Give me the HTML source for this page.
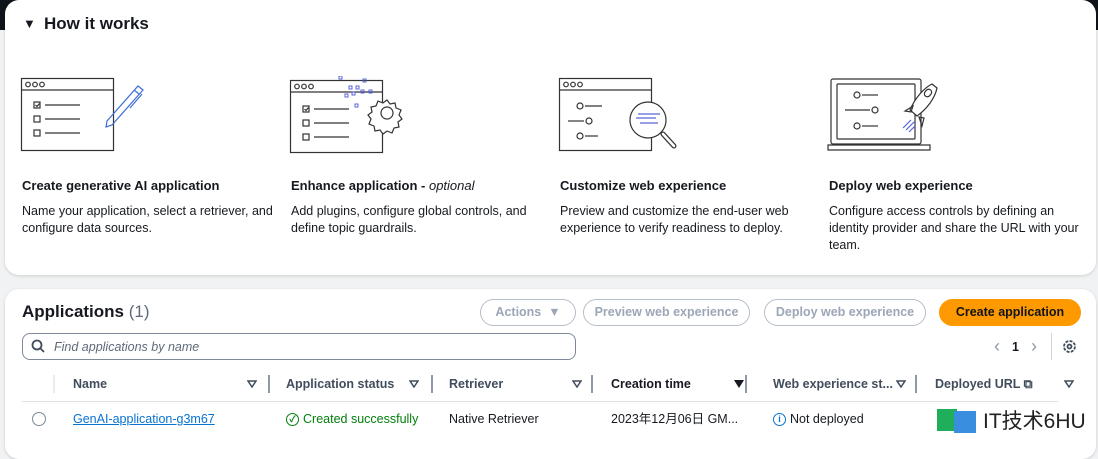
<!DOCTYPE html>
<html><head><meta charset="utf-8"><style>
*{box-sizing:border-box;margin:0;padding:0}
body{width:1098px;height:443px;background:#f1f2f3;font-family:"Liberation Sans","Noto Sans CJK SC",sans-serif;color:#16191f;position:relative;overflow:hidden}
.corner{position:absolute;left:0;top:0;width:30px;height:30px;background:#0f141a}
.corner2{position:absolute;right:0;top:0;width:30px;height:30px;background:#0f141a}
.panel{position:absolute;background:#fff;border-radius:14px;box-shadow:0 1px 3px rgba(0,0,0,.15)}
.abs{position:absolute;white-space:nowrap;line-height:16px}
h2{position:absolute;font-size:17px;font-weight:bold}
.t{font-size:13px;font-weight:bold}
.d{font-size:12.5px;line-height:17px;color:#16191f;white-space:normal;width:260px}
.btn{position:absolute;height:27px;border:1.5px solid #b6bec9;border-radius:14px;color:#9ba7b6;font-size:12.5px;font-weight:bold;text-align:center;line-height:24px;background:#fff}
.th{position:absolute;top:376px;font-size:12.5px;line-height:16px;font-weight:bold;color:#414d5c}
.sep{position:absolute;top:375px;width:1.5px;height:18px;background:#8d99a8}
.tri{position:absolute;top:380px}
.row{top:411px;font-size:12.5px;display:flex;align-items:center;gap:4px}
.ic{display:inline-block;width:13px;height:13px;border:1.5px solid;border-radius:50%;font-size:9px;line-height:10px;text-align:center;font-weight:bold}
</style></head><body>
<div class="corner"></div><div class="corner2"></div>
<div class="panel" style="left:5px;top:0;width:1091px;height:275px"></div>
<div class="panel" style="left:5px;top:289px;width:1091px;height:170px"></div>

<div class="abs" style="left:23px;top:16px;font-size:13px">▼</div>
<h2 style="left:44px;top:14px">How it works</h2>

<svg class="abs" style="left:20px;top:76px" width="130" height="80" viewBox="0 0 130 80" fill="none" stroke="#333" stroke-width="1.2">
<rect x="1.5" y="2.5" width="92" height="72"/><line x1="1.5" y1="14" x2="93.5" y2="14"/>
<circle cx="8" cy="8.5" r="2.3"/><circle cx="15" cy="8.5" r="2.3"/><circle cx="22" cy="8.5" r="2.3"/>
<rect x="14" y="26" width="6" height="6"/><path d="M15.5 29l1.5 1.5 2.5-3"/><line x1="25" y1="29" x2="60" y2="29"/>
<rect x="14" y="40" width="6" height="6"/><line x1="25" y1="43" x2="60" y2="43"/>
<rect x="14" y="54" width="6" height="6"/><line x1="25" y1="57" x2="60" y2="57"/>
<path d="M118 10l5 4-31 35-6 2 1-6z M114 14l5 4 M122 18l-12 14" stroke="#3d6ed8"/>
</svg>
<svg class="abs" style="left:289px;top:76px" width="130" height="80" viewBox="0 0 130 80" fill="none" stroke="#333" stroke-width="1.2">
<rect x="1.5" y="4.5" width="92" height="72"/><line x1="1.5" y1="16" x2="93.5" y2="16"/>
<circle cx="8" cy="10.5" r="2.3"/><circle cx="15" cy="10.5" r="2.3"/><circle cx="22" cy="10.5" r="2.3"/>
<rect x="14" y="30" width="6" height="6"/><path d="M15.5 33l1.5 1.5 2.5-3"/><line x1="25" y1="33" x2="60" y2="33"/>
<rect x="14" y="44" width="6" height="6"/><line x1="25" y1="47" x2="60" y2="47"/>
<rect x="14" y="58" width="6" height="6"/><line x1="25" y1="61" x2="60" y2="61"/>
<g stroke="#5a66d8" stroke-width="1"><rect x="50" y="0" width="3" height="3"/><rect x="74" y="3" width="3" height="3"/><rect x="60" y="10" width="3" height="3"/><rect x="67" y="10" width="3" height="3"/><rect x="56" y="18" width="3" height="3"/><rect x="63" y="16" width="3" height="3"/><rect x="72" y="14" width="3" height="3"/><rect x="80" y="14" width="3" height="3"/><rect x="66" y="28" width="3" height="3"/></g>
<g fill="#fff"><path d="M98 24l3 4 5-1 1 5 5 2-2 5 3 4-4 3 1 5-5 1-2 5-5-2-4 3-3-4-5 1-1-5-5-2 2-5-3-4 4-3-1-5 5-1 2-5 5 2z"/><circle cx="98" cy="37" r="6"/></g>
</svg>
<svg class="abs" style="left:558px;top:76px" width="130" height="80" viewBox="0 0 130 80" fill="none" stroke="#333" stroke-width="1.2">
<rect x="1.5" y="2.5" width="92" height="72"/><line x1="1.5" y1="14" x2="93.5" y2="14"/>
<circle cx="8" cy="8.5" r="2.3"/><circle cx="15" cy="8.5" r="2.3"/><circle cx="22" cy="8.5" r="2.3"/>
<circle cx="22" cy="30" r="3"/><line x1="27" y1="30" x2="44" y2="30"/>
<line x1="10" y1="45" x2="26" y2="45"/><circle cx="31" cy="45" r="3"/>
<circle cx="22" cy="60" r="3"/><line x1="27" y1="60" x2="40" y2="60"/>
<line x1="105" y1="58" x2="116" y2="70" stroke-width="5" stroke-linecap="round"/><line x1="105" y1="58" x2="116" y2="70" stroke-width="2.6" stroke="#fff" stroke-linecap="round"/>
<circle cx="90" cy="44" r="18" fill="#fff"/>
<g stroke="#5a66d8"><line x1="80" y1="38" x2="102" y2="38"/><line x1="78" y1="42" x2="98" y2="42"/><line x1="82" y1="47" x2="100" y2="47"/></g>
</svg>
<svg class="abs" style="left:827px;top:76px" width="130" height="80" viewBox="0 0 130 80" fill="none" stroke="#333" stroke-width="1.2">
<rect x="4" y="3" width="90" height="65" rx="2"/><rect x="10" y="8" width="78" height="55" rx="1"/>
<path d="M1 69h102v5H1z"/>
<circle cx="30" cy="19" r="3"/><line x1="35" y1="19" x2="51" y2="19"/>
<line x1="18" y1="34" x2="43" y2="34"/><circle cx="48" cy="34" r="3"/>
<circle cx="30" cy="50" r="3"/><line x1="35" y1="50" x2="51" y2="50"/>
<path d="M105 8c-8 4-17 14-22 26l7 6c10-7 18-18 20-28z" fill="#fff"/><rect x="98" y="13" width="6" height="8" rx="3" transform="rotate(40 101 17)"/>
<path d="M86 30l-8 5 6 1z M92 41l3 9 2-8z"/>
<g stroke="#5a66d8"><line x1="76" y1="52" x2="84" y2="44"/><line x1="79" y1="54" x2="87" y2="46"/><line x1="82" y1="56" x2="88" y2="50"/></g>
</svg>

<div class="abs t" style="left:22px;top:178px">Create generative AI application</div>
<div class="abs d" style="left:22px;top:203px">Name your application, select a retriever, and configure data sources.</div>
<div class="abs t" style="left:291px;top:178px">Enhance application - <i style="font-weight:normal">optional</i></div>
<div class="abs d" style="left:291px;top:203px">Add plugins, configure global controls, and define topic guardrails.</div>
<div class="abs t" style="left:560px;top:178px">Customize web experience</div>
<div class="abs d" style="left:560px;top:203px">Preview and customize the end-user web experience to verify readiness to deploy.</div>
<div class="abs t" style="left:829px;top:178px">Deploy web experience</div>
<div class="abs d" style="left:829px;top:203px;width:255px">Configure access controls by defining an identity provider and share the URL with your team.</div>

<div class="abs" style="left:22px;top:302px;font-size:17px;line-height:20px;font-weight:bold">Applications <span style="font-weight:normal;color:#5f6b7a">(1)</span></div>
<div class="btn" style="left:480px;top:299px;width:96px">Actions &nbsp;▼</div>
<div class="btn" style="left:583px;top:299px;width:167px">Preview web experience</div>
<div class="btn" style="left:764px;top:299px;width:162px">Deploy web experience</div>
<div class="btn" style="left:939px;top:299px;width:142px;background:#ff9900;border-color:#ff9900;color:#0f141a">Create application</div>

<div class="abs" style="left:22px;top:333px;width:554px;height:27px;border:1.5px solid #7d8998;border-radius:8px"></div>
<svg class="abs" style="left:31px;top:339px" width="15" height="15" fill="none" stroke="#414d5c" stroke-width="1.8"><circle cx="6" cy="6" r="4.5"/><line x1="9.5" y1="9.5" x2="13" y2="13"/></svg>
<div class="abs" style="left:54px;top:339px;font-size:12.5px;font-style:italic;color:#5f6b7a">Find applications by name</div>
<div class="abs" style="left:994px;top:336px;font-size:18px;line-height:20px;color:#8d99a8">‹</div>
<div class="abs" style="left:1012px;top:339px;font-size:12.5px;font-weight:bold">1</div>
<div class="abs" style="left:1031px;top:336px;font-size:18px;line-height:20px;color:#8d99a8">›</div>
<div class="abs" style="left:1051px;top:333px;width:1px;height:27px;background:#d1d5db"></div>
<svg class="abs" style="left:1062px;top:339px" width="15" height="15" fill="none" stroke="#414d5c" stroke-width="1.8"><circle cx="7.5" cy="7.5" r="5.5" stroke-dasharray="3 1.3"/><circle cx="7.5" cy="7.5" r="2"/></svg>

<div class="sep" style="left:53px;background:#e9ebed"></div>
<div class="th" style="left:73px">Name</div><svg class="tri" style="left:247px" width="10" height="8"><path d="M1 1h8L5 7z" fill="none" stroke="#414d5c" stroke-width="1.5"/></svg><div class="sep" style="left:268px"></div>
<div class="th" style="left:286px">Application status</div><svg class="tri" style="left:409px" width="10" height="8"><path d="M1 1h8L5 7z" fill="none" stroke="#414d5c" stroke-width="1.5"/></svg><div class="sep" style="left:431px"></div>
<div class="th" style="left:449px">Retriever</div><svg class="tri" style="left:572px" width="10" height="8"><path d="M1 1h8L5 7z" fill="none" stroke="#414d5c" stroke-width="1.5"/></svg><div class="sep" style="left:591px"></div>
<div class="th" style="left:611px;color:#16191f">Creation time</div><svg class="tri" style="left:734px" width="10" height="8"><path d="M0 0h10L5 8z" fill="#16191f"/></svg><div class="sep" style="left:745px"></div>
<div class="th" style="left:773px">Web experience st...</div><svg class="tri" style="left:896px" width="10" height="8"><path d="M1 1h8L5 7z" fill="none" stroke="#414d5c" stroke-width="1.5"/></svg><div class="sep" style="left:915px"></div>
<div class="th" style="left:935px">Deployed URL ⧉</div><svg class="tri" style="left:1064px" width="10" height="8"><path d="M1 1h8L5 7z" fill="none" stroke="#414d5c" stroke-width="1.5"/></svg>
<div class="abs" style="left:22px;top:401px;width:1036px;height:1px;background:#e0e3e6"></div>

<div class="abs" style="left:32px;top:412px;width:14px;height:14px;border:1.5px solid #7d8998;border-radius:50%"></div>
<div class="abs row" style="left:73px;color:#0972d3;text-decoration:underline">GenAI-application-g3m67</div>
<div class="abs row" style="left:286px;color:#037f0c"><span class="ic" style="border-color:#037f0c">✓</span>Created successfully</div>
<div class="abs row" style="left:449px">Native Retriever</div>
<div class="abs row" style="left:611px">2023年12月06日 GM...</div>
<div class="abs row" style="left:773px"><span class="ic" style="border-color:#0972d3;color:#0972d3">i</span>Not deployed</div>
<div class="abs" style="left:937px;top:409px;width:20px;height:22px;background:#1fae5a"></div>
<div class="abs" style="left:954px;top:411px;width:22px;height:22px;background:#3a8ee0"></div>
<div class="abs" style="left:983px;top:410px;font-size:21px;line-height:24px;color:#222">IT技术6HU</div>
</body></html>
